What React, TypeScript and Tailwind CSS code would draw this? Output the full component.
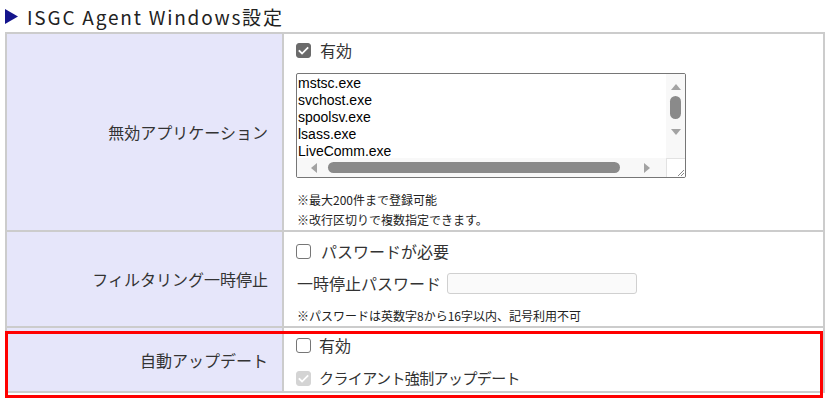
import React from 'react';

const jp = { fontFamily: '"Noto Sans CJK JP", "Noto Sans", sans-serif' };

type BoxState = 'on' | 'off' | 'disabled';

const Check: React.FC<{ state: BoxState }> = ({ state }) => {
  const cls =
    state === 'on'
      ? 'bg-[#6b6b6b] border-[#6b6b6b]'
      : state === 'disabled'
      ? 'bg-[#d4d4d4] border-[#d4d4d4]'
      : 'bg-white border-[#767676]';
  return (
    <span className={`w-[15px] h-[15px] rounded-[3px] border flex items-center justify-center shrink-0 ${cls}`}>
      {state !== 'off' && (
        <svg viewBox="0 0 16 16" className="w-[13px] h-[13px]" fill="none" stroke="white" strokeWidth={2.2}>
          <path d="M3 8.5l3.2 3.2L13 4.8" strokeLinecap="square" />
        </svg>
      )}
    </span>
  );
};

const Label: React.FC<{ children: React.ReactNode }> = ({ children }) => (
  <div className="bg-[#e6e6fa] border-r-2 border-[#cccccc] flex items-center justify-end pr-[14px] text-[16px] text-[#333]">
    {children}
  </div>
);

const apps = ['mstsc.exe', 'svchost.exe', 'spoolsv.exe', 'lsass.exe', 'LiveComm.exe'];

const FakeTextarea: React.FC = () => (
  <div className="w-[390px] h-[105px] border border-[#767676] rounded-[2px] bg-white relative overflow-hidden">
    <div className="pl-[1px] pt-[1px] text-[14px] leading-[17px] text-black" style={{ fontFamily: '"Liberation Sans", Arial, sans-serif' }}>
      {apps.map((a) => (
        <div key={a}>{a}</div>
      ))}
    </div>
    {/* vertical scrollbar */}
    <div className="absolute right-0 top-0 w-[19px] h-[84px] bg-[#f8f8f8] flex flex-col items-center">
      <svg viewBox="0 0 10 6" className="w-[10px] h-[6px] mt-[10px]" fill="#a3a3a3">
        <polygon points="0,6 5,0 10,6" />
      </svg>
      <div className="w-[11px] h-[23px] rounded-full bg-[#8a8a8a] mt-[6px]" />
      <svg viewBox="0 0 10 6" className="w-[10px] h-[6px] mt-[10px]" fill="#a3a3a3">
        <polygon points="0,0 10,0 5,6" />
      </svg>
    </div>
    {/* horizontal scrollbar */}
    <div className="absolute left-0 bottom-0 right-[19px] h-[19px] bg-[#f8f8f8] flex items-center">
      <svg viewBox="0 0 6 10" className="w-[6px] h-[10px] ml-[14px]" fill="#a3a3a3">
        <polygon points="6,0 6,10 0,5" />
      </svg>
      <div className="w-[292px] h-[11px] rounded-full bg-[#8a8a8a] ml-[11px]" />
      <svg viewBox="0 0 6 10" className="w-[6px] h-[10px] ml-[24px]" fill="#a3a3a3">
        <polygon points="0,0 6,5 0,10" />
      </svg>
    </div>
    {/* resizer corner */}
    <div className="absolute right-0 bottom-0 w-[19px] h-[19px] bg-white border-l border-t border-[#e2e2e2]">
      <svg viewBox="0 0 19 19" className="w-[19px] h-[19px]" stroke="#8a8a8a" strokeWidth={1}>
        <path d="M17 11L11 17M17 14L14 17" />
      </svg>
    </div>
  </div>
);

export default function App() {
  return (
    <div className="w-[825px] h-[400px] bg-white relative overflow-hidden text-[#333]" style={jp}>
      <div className="h-[32px] flex items-center pl-[5px]">
        <svg viewBox="0 0 13 15" className="w-[13px] h-[15px]" fill="#14148c">
          <polygon points="0,0 13,7.5 0,15" />
        </svg>
        <span className="ml-[9px] text-[19px] tracking-[1.8px] text-[#222] leading-none">ISGC Agent Windows設定</span>
      </div>

      <div className="ml-[5px] w-[820px] border-2 border-[#cccccc]">
        {/* row 1 */}
        <div className="grid grid-cols-[277px_1fr] h-[196px]">
          <Label>無効アプリケーション</Label>
          <div className="pl-[12px] pt-[6px]">
            <div className="flex items-center h-[20px] gap-[9px] text-[16px]">
              <Check state="on" />
              <span>有効</span>
            </div>
            <div className="mt-[13px]">
              <FakeTextarea />
            </div>
            <div className="mt-[12px] text-[12px] leading-[20px] pl-[1px] text-[#222]">
              <div>※最大200件まで登録可能</div>
              <div>※改行区切りで複数指定できます。</div>
            </div>
          </div>
        </div>

        {/* row 2 */}
        <div className="grid grid-cols-[277px_1fr] h-[96px] border-t-2 border-[#cccccc]">
          <Label>フィルタリング一時停止</Label>
          <div className="pl-[12px] pt-[9px]">
            <div className="flex items-center h-[20px] gap-[10px] text-[16px]">
              <Check state="off" />
              <span>パスワードが必要</span>
            </div>
            <div className="flex items-center h-[22px] mt-[11px] text-[16px]">
              <span className="pl-[1px]">一時停止パスワード</span>
              <div className="ml-[6px] w-[190px] h-[21px] border border-[#d0d0d0] rounded-[3px] bg-[#fafafa]" />
            </div>
            <div className="mt-[14px] text-[12px] leading-[16px] pl-[1px] text-[#222]">※パスワードは英数字8から16字以内、記号利用不可</div>
          </div>
        </div>

        {/* row 3 */}
        <div className="grid grid-cols-[277px_1fr] h-[65px] border-t-2 border-[#cccccc]">
          <Label>自動アップデート</Label>
          <div className="pl-[12px] pt-[7px]">
            <div className="flex items-center h-[20px] gap-[8px] text-[16px]">
              <Check state="off" />
              <span>有効</span>
            </div>
            <div className="flex items-center h-[20px] mt-[13px] gap-[8px] text-[15px] tracking-[-0.6px]">
              <Check state="disabled" />
              <span>クライアント強制アップデート</span>
            </div>
          </div>
        </div>
      </div>

      {/* red annotation frame */}
      <div className="absolute left-[5px] top-[331px] w-[818px] h-[67px] border-[3px] border-[#ff0000]" />
    </div>
  );
}
